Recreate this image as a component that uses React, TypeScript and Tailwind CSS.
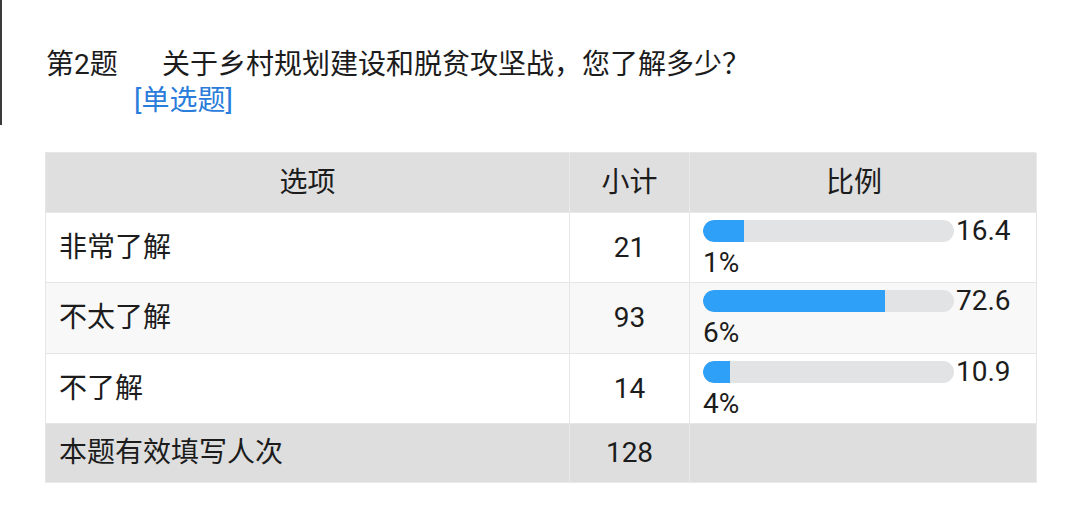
import React from "react";

const rows = [
  { label: "非常了解", count: "21", pct: 16.41, a: "16.4", b: "1%", bg: "bg-white", h: "h-[70px]" },
  { label: "不太了解", count: "93", pct: 72.66, a: "72.6", b: "6%", bg: "bg-[#f8f8f8]", h: "h-[71px]" },
  { label: "不了解", count: "14", pct: 10.94, a: "10.9", b: "4%", bg: "bg-white", h: "h-[70px]" },
];

export default function App() {
  return (
    <div
      className="relative w-[1080px] h-[512px] bg-white text-[#1c1c1c] overflow-hidden"
      style={{ fontFamily: 'Roboto, "Noto Sans CJK SC", sans-serif' }}
    >
      <div className="absolute left-0 top-0 w-[2px] h-[125px] bg-[#3a3a3a]" />
      <div className="h-[152px] pl-[46px] pt-[47px] text-[28px] leading-[36px]">
        <div className="flex">
          <span className="w-[116px] shrink-0">第2题</span>
          <span>关于乡村规划建设和脱贫攻坚战，您了解多少？</span>
        </div>
        <div className="pl-[88px] text-[#2a7ddb]">[单选题]</div>
      </div>

      <div className="ml-[45px] w-[991px] grid grid-cols-[524px_120px_347px] border-l border-t border-[#e6e6e6] text-[28px]">
        <div className="h-[60px] bg-[#dfdfdf] border-r border-b border-[#e9e9e9] flex items-center justify-center">选项</div>
        <div className="h-[60px] bg-[#dfdfdf] border-r border-b border-[#e9e9e9] flex items-center justify-center">小计</div>
        <div className="h-[60px] bg-[#dfdfdf] border-r border-b border-[#e9e9e9] flex items-center justify-center pr-[18px]">比例</div>

        {rows.map((r) => (
          <React.Fragment key={r.label}>
            <div className={`${r.h} ${r.bg} border-r border-b border-[#e6e6e6] flex items-center pl-[13px]`}>{r.label}</div>
            <div className={`${r.h} ${r.bg} border-r border-b border-[#e6e6e6] flex items-center justify-center`}>{r.count}</div>
            <div className={`${r.h} ${r.bg} border-r border-b border-[#e6e6e6] pl-[13px] pt-[2px] leading-[32px]`}>
              <div className="flex items-center h-[32px]">
                <div className="w-[251px] h-[22px] rounded-full bg-[#e2e3e5] overflow-hidden">
                  <div className="h-full rounded-l-full bg-[#2ea0f7]" style={{ width: `${r.pct}%` }} />
                </div>
                <span className="ml-[2px]">{r.a}</span>
              </div>
              <div>{r.b}</div>
            </div>
          </React.Fragment>
        ))}

        <div className="h-[59px] bg-[#dedede] border-r border-b border-[#e9e9e9] flex items-center pl-[13px]">本题有效填写人次</div>
        <div className="h-[59px] bg-[#dedede] border-r border-b border-[#e9e9e9] flex items-center justify-center">128</div>
        <div className="h-[59px] bg-[#dedede] border-r border-b border-[#e9e9e9]" />
      </div>
    </div>
  );
}
